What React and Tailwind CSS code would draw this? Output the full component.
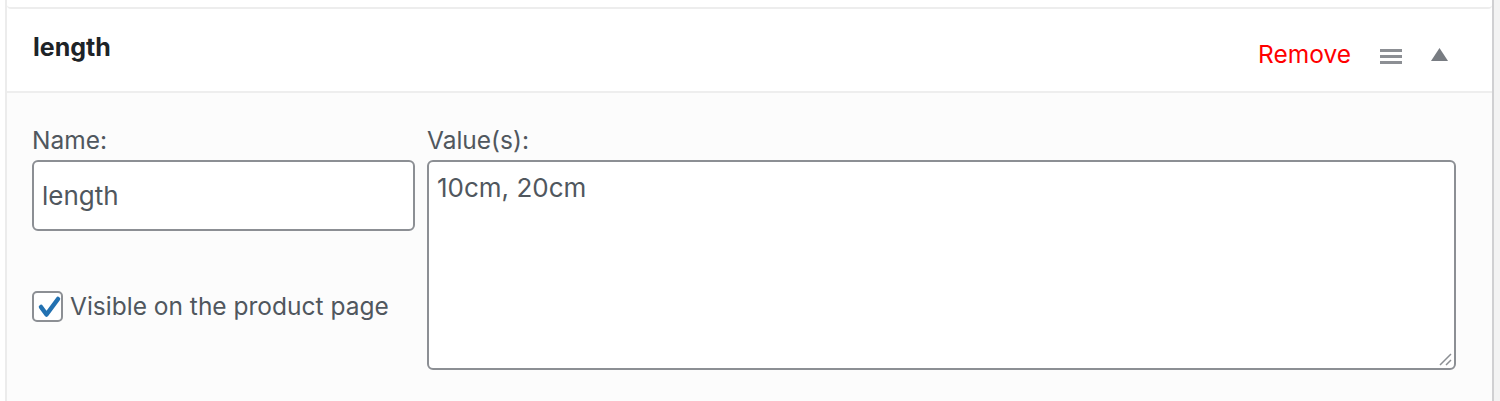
import React from "react"

const font = { fontFamily: "Inter, 'Noto Sans', sans-serif" }

function Hamburger() {
  return (
    <svg width="22" height="15" viewBox="0 0 22 15" className="block">
      <rect x="0" y="0" width="22" height="3" fill="#8c8f94" />
      <rect x="0" y="6" width="22" height="3" fill="#8c8f94" />
      <rect x="0" y="12" width="22" height="3" fill="#8c8f94" />
    </svg>
  )
}

function Caret() {
  return (
    <svg width="17" height="13" viewBox="0 0 17 13" className="block">
      <polygon points="8.5,0 17,13 0,13" fill="#787c82" />
    </svg>
  )
}

function Checkbox() {
  return (
    <span className="relative block h-[31px] w-[31px] shrink-0 rounded-[5px] border-2 border-[#8c8f94] bg-white">
      <svg width="31" height="31" viewBox="0 0 31 31" className="absolute -left-[2px] -top-[2px]">
        <path d="M9 16 L14.5 23.5 L26 8" fill="none" stroke="#2271b1" strokeWidth="4.5" strokeLinecap="round" strokeLinejoin="round" />
      </svg>
    </span>
  )
}

export default function App() {
  return (
    <div className="flex h-[401px] w-[1500px] overflow-hidden bg-white pl-[5px]" style={font}>
      <div className="h-full w-[1489px] shrink-0 border-x-2 border-l-[#ececec] border-r-[#d0d0d2]">
        {/* previous row */}
        <div className="h-[9px] rounded-b-[4px] border-b-2 border-[#ededed] bg-white" />

        {/* header */}
        <div className="flex h-[84px] items-start justify-between border-b-2 border-[#eeeeee] bg-white pl-[26px] pr-[44px]">
          <h3 className="mt-[26px] text-[25px] font-bold leading-none text-[#1d2327]">length</h3>
          <div className="mt-[30px] flex items-start">
            <button className="text-[24.5px] leading-[30px] text-[#ff0000]">Remove</button>
            <span className="ml-[29px] mt-[10px]"><Hamburger /></span>
            <span className="ml-[29px] mt-[9px]"><Caret /></span>
          </div>
        </div>

        {/* body */}
        <div className="flex h-full gap-[12px] bg-[#fcfcfc] pl-[25px] pr-[36px] pt-[32px]">
          <div className="flex w-[383px] shrink-0 flex-col">
            <label className="text-[24.5px] leading-[30px] text-[#50575e]">Name:</label>
            <div className="mt-[5px] flex h-[71px] items-center rounded-[6px] border-2 border-[#8c8f94] bg-white px-[8px] text-[26px] text-[#50575e]">
              length
            </div>
            <label className="mt-[59px] flex items-center gap-[7px] text-[24.5px] leading-[32px] text-[#50575e]">
              <Checkbox />
              Visible on the product page
            </label>
          </div>
          <div className="flex flex-1 flex-col">
            <label className="text-[24.5px] leading-[30px] text-[#50575e]">Value(s):</label>
            <div className="relative mt-[5px] h-[210px] rounded-[6px] border-2 border-[#8c8f94] bg-white px-[8px] pt-[12px] text-[26px] leading-[28px] text-[#50575e]">
              10cm, 20cm
              <svg width="14" height="14" viewBox="0 0 14 14" className="absolute bottom-[2px] right-[2px]">
                <path d="M13 2 L2 13 M13 8 L8 13" stroke="#8c8f94" strokeWidth="1.5" />
              </svg>
            </div>
          </div>
        </div>
      </div>
      <div className="h-full flex-1 bg-[#f3f3f3]" />
    </div>
  )
}
